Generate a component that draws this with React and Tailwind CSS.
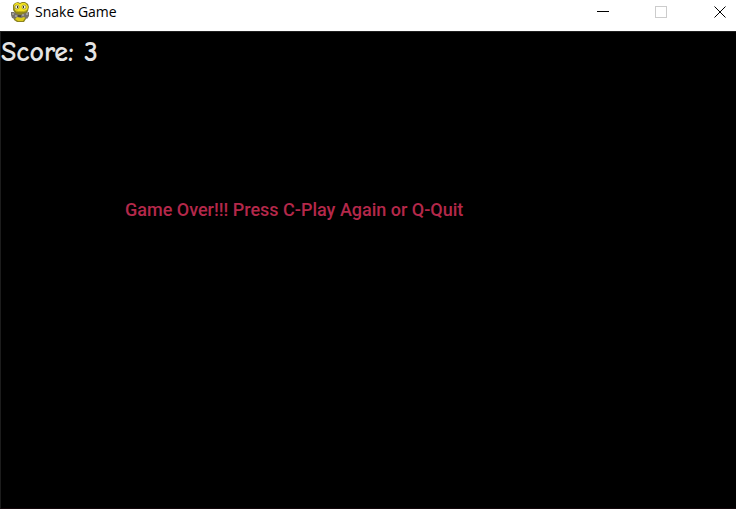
function SnakeIcon() {
  return (
    <svg className="h-5 w-5 shrink-0" viewBox="0 0 20 20" aria-hidden="true">
      <path d="M3 3 5 1l3-1 2 1 2-1h3l3 2 1 3-1 4-2 3v5l-2 3H7l-3-2-1-4 2-3-2-3z" fill="#8d8420" />
      <path d="M4 3 6 1h2l2 1 2-1h3l2 2 1 2-1 3-3 2H7L5 8z" fill="#f3e21d" />
      <path d="M6 13h9v3l-2 3H8l-3-2z" fill="#dccb1b" />
      <circle cx="7" cy="5" r="2" fill="#f2f0dc" stroke="#77702c" strokeWidth=".6" />
      <circle cx="14" cy="5" r="2" fill="#f2f0dc" stroke="#77702c" strokeWidth=".6" />
      <path d="M7 4h1v2H7zM13 4h1v2h-1z" fill="#39361d" />
      <path d="M6 9c3 1 7 1 10 0" fill="none" stroke="#b5a619" />
      <path d="M1 10h3l3 2 4 1 4-2 4-1v4l-2 3-3-2-3 1-4-1-2 2-3-1-1-3z" fill="#77726b" />
      <path d="M2 12h2M5 14h2M12 13h2M16 12h2" stroke="#c9c6c2" />
      <path d="M8 13h3v2H8z" fill="#4e4a45" />
    </svg>
  );
}

function TitleBar() {
  return (
    <header className="flex h-[31px] items-start bg-white text-black">
      <div className="flex h-6 min-w-0 flex-1 items-center gap-[5px] pl-2.5">
        <SnakeIcon />
        <h1 className="font-['Open_Sans','Noto_Sans',sans-serif] text-[14px] leading-6 whitespace-nowrap">
          Snake Game
        </h1>
      </div>
      <button type="button" aria-label="Minimize" className="flex h-6 w-[58px] items-center justify-center">
        <svg className="h-3 w-3" viewBox="0 0 12 12" shapeRendering="crispEdges">
          <path d="M0 5.5h12" stroke="#000" />
        </svg>
      </button>
      <button type="button" aria-label="Maximize" disabled className="flex h-6 w-[58px] items-center justify-center">
        <svg className="h-3 w-3" viewBox="0 0 12 12" shapeRendering="crispEdges">
          <path d="M.5.5h11v11H.5z" fill="none" stroke="#ccc" />
        </svg>
      </button>
      <button type="button" aria-label="Close" className="ml-3.5 flex h-6 w-8 items-center justify-center">
        <svg className="h-3 w-3" viewBox="0 0 12 12">
          <path d="m.5.5 11 11m0-11-11 11" stroke="#000" strokeWidth="1" />
        </svg>
      </button>
    </header>
  );
}

export default function App() {
  return (
    <div className="flex min-h-screen flex-col bg-black">
      <TitleBar />
      <main className="flex-1 border-t border-b border-l border-t-[#202020] border-b-[#12060a] border-l-[#1c1c1c] bg-black">
        <p className="pt-1 font-['Comic_Sans_MS','Comic_Neue',Lato,sans-serif] text-[28px] leading-8 font-bold text-[#e4e4e4]">
          Score: 3
        </p>
        <p className="mt-[130px] pl-[124px] font-[Roboto,sans-serif] text-[18px] leading-6 font-medium whitespace-nowrap text-[#b4284a]">
          Game Over!!! Press C-Play Again or Q-Quit
        </p>
      </main>
    </div>
  );
}
